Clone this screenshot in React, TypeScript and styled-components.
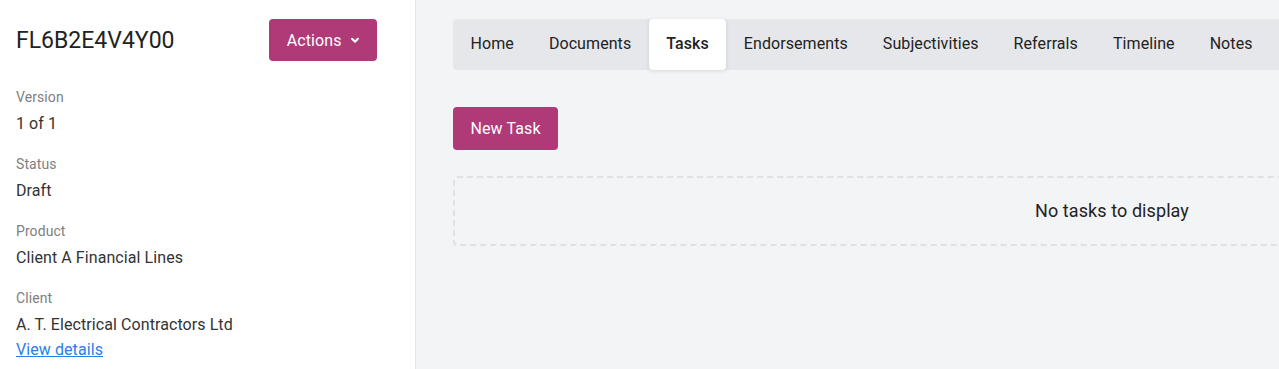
import React from "react";
import styled, { createGlobalStyle } from "styled-components";

const GlobalStyle = createGlobalStyle`
  html, body {
    margin: 0;
    padding: 0;
    overflow: hidden;
    font-family: Roboto, "Liberation Sans", Arial, sans-serif;
    letter-spacing: 0.08px;
    color: #333333;
  }
`;

const Page = styled.div`
  display: flex;
  height: 369px;
  width: 100vw;
  overflow: hidden;
`;

const Sidebar = styled.aside`
  flex: 0 0 416px;
  box-sizing: border-box;
  background: #ffffff;
  border-right: 1px solid #e5e7eb;
  padding: 19px 38px 0 16px;
  display: flex;
  flex-direction: column;
`;

const Header = styled.div`
  display: flex;
  justify-content: space-between;
  align-items: center;
  margin-bottom: 26px;
`;

const Reference = styled.h1`
  margin: 0;
  font-size: 23px;
  font-weight: 400;
  color: #222222;
  letter-spacing: 0;
`;

const PrimaryButton = styled.button<{ $h?: number }>`
  display: inline-flex;
  align-items: center;
  gap: 8px;
  height: ${(p) => p.$h ?? 42}px;
  padding: 0 17.5px;
  border: none;
  border-radius: 4px;
  background: #b03a78;
  color: #ffffff;
  font-family: inherit;
  font-size: 16px;
  letter-spacing: 0.1px;
  cursor: pointer;
`;

const Field = styled.div`
  display: flex;
  flex-direction: column;
  margin-bottom: 18px;
`;

const Label = styled.span`
  font-size: 14px;
  line-height: 20px;
  color: #808080;
  margin-bottom: 5px;
`;

const Value = styled.span`
  font-size: 16px;
  line-height: 24px;
  color: #333333;
`;

const DetailsLink = styled.a`
  font-size: 16px;
  line-height: 24px;
  margin-top: 1px;
  color: #2b7de9;
  text-decoration: underline;
  cursor: pointer;
`;

const Main = styled.main`
  flex: 1 0 auto;
  background: #f3f4f6;
  padding: 19px 0 0 37px;
`;

const Content = styled.div`
  width: 1318px;
  display: flex;
  flex-direction: column;
  align-items: flex-start;
`;

const TabBar = styled.nav`
  align-self: stretch;
  display: flex;
  height: 51px;
  background: #e5e7eb;
  border-radius: 4px;
  margin-bottom: 37px;
`;

const Tab = styled.div<{ $active?: boolean }>`
  display: flex;
  align-items: center;
  padding: 0 17.5px 2px;
  font-size: 16px;
  color: #222222;
  border-radius: 4px;
  font-weight: ${(p) => (p.$active ? 500 : 400)};
  background: ${(p) => (p.$active ? "#ffffff" : "transparent")};
  box-shadow: ${(p) => (p.$active ? "0 1px 4px rgba(0, 0, 0, 0.12)" : "none")};
  cursor: pointer;
`;

const EmptyBox = styled.div`
  align-self: stretch;
  margin-top: 26px;
  height: 70px;
  box-sizing: border-box;
  border: 2px dashed #dfe1e5;
  border-radius: 4px;
  display: flex;
  align-items: center;
  justify-content: center;
  padding-bottom: 2px;
  font-size: 18px;
  color: #222222;
`;

const ChevronDown = () => (
  <svg width="10" height="10" viewBox="0 0 24 24" fill="none" stroke="currentColor" strokeWidth="5" strokeLinecap="round" strokeLinejoin="round">
    <path d="M5 9l7 7 7-7" />
  </svg>
);

const fields = [
  { label: "Version", value: "1 of 1" },
  { label: "Status", value: "Draft" },
  { label: "Product", value: "Client A Financial Lines" },
];

const tabs = ["Home", "Documents", "Tasks", "Endorsements", "Subjectivities", "Referrals", "Timeline", "Notes"];

const App = () => {
  return (
    <>
      <GlobalStyle />
      <Page>
        <Sidebar>
          <Header>
            <Reference>FL6B2E4V4Y00</Reference>
            <PrimaryButton type="button">
              Actions <ChevronDown />
            </PrimaryButton>
          </Header>
          {fields.map((f) => (
            <Field key={f.label}>
              <Label>{f.label}</Label>
              <Value>{f.value}</Value>
            </Field>
          ))}
          <Field>
            <Label>Client</Label>
            <Value>A. T. Electrical Contractors Ltd</Value>
            <DetailsLink>View details</DetailsLink>
          </Field>
        </Sidebar>
        <Main>
          <Content>
            <TabBar>
              {tabs.map((t) => (
                <Tab key={t} $active={t === "Tasks"}>
                  {t}
                </Tab>
              ))}
            </TabBar>
            <PrimaryButton type="button" $h={43}>
              New Task
            </PrimaryButton>
            <EmptyBox>No tasks to display</EmptyBox>
          </Content>
        </Main>
      </Page>
    </>
  );
};

export default App;
